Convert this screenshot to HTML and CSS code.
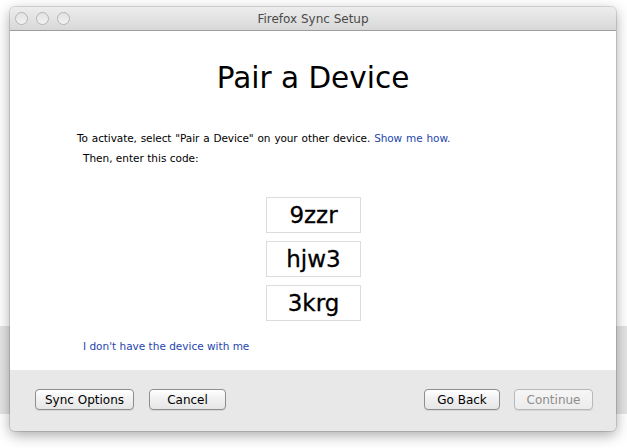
FILE: index.html
```html
<!DOCTYPE html>
<html>
<head>
<meta charset="utf-8">
<link rel="stylesheet" href="styles.css">
</head>
<body>
<div class="desktop">
  <div class="backwin"></div>
  <div class="window">
    <div class="titlebar">
      <div class="lights">
        <span class="light"></span><span class="light"></span><span class="light"></span>
      </div>
      <div class="title">Firefox Sync Setup</div>
    </div>
    <div class="content">
      <h1 class="heading">Pair a Device</h1>
      <p class="line1">To activate, select "Pair a Device" on your other device. <a class="link">Show me how.</a></p>
      <p class="line2">Then, enter this code:</p>
      <div class="codes">
        <div class="code">9zzr</div>
        <div class="code">hjw3</div>
        <div class="code">3krg</div>
      </div>
      <a class="link nodevice">I don't have the device with me</a>
    </div>
    <div class="footer">
      <div class="group">
        <button class="btn btn-options">Sync Options</button>
        <button class="btn btn-cancel">Cancel</button>
      </div>
      <div class="group">
        <button class="btn btn-back">Go Back</button>
        <button class="btn btn-continue" disabled>Continue</button>
      </div>
    </div>
  </div>
</div>
</body>
</html>
```
FILE: styles.css
```css
html, body {
  margin: 0;
  padding: 0;
  background: #ffffff;
}
.desktop {
  position: relative;
  width: 627px;
  height: 448px;
  overflow: hidden;
  font-family: "DejaVu Sans", "Liberation Sans", sans-serif;
}
.backwin {
  position: absolute;
  left: 0;
  top: 326px;
  width: 627px;
  height: 88px;
  background: #e4e4e4;
}
.window {
  position: absolute;
  left: 10px;
  top: 7px;
  width: 606px;
  height: 424px;
  display: flex;
  flex-direction: column;
  border-radius: 5px;
  background: #e8e8e8;
  box-shadow: 0 4px 14px rgba(0,0,0,0.35), 0 0 0 1px rgba(0,0,0,0.12);
  overflow: hidden;
}
.titlebar {
  height: 23px;
  flex: none;
  position: relative;
  display: flex;
  align-items: center;
  justify-content: center;
  background: linear-gradient(#ededed, #d8d8d8);
  border-bottom: 1px solid #9d9d9d;
}
.lights {
  position: absolute;
  left: 5px;
  top: 5px;
  display: flex;
  gap: 8px;
}
.light {
  width: 11px;
  height: 11px;
  border-radius: 50%;
  border: 1px solid #b4b4b4;
  background: linear-gradient(#e2e2e2, #f2f2f2);
}
.title {
  font-size: 12px;
  color: #4a4a4a;
  padding-top: 1px;
}
.content {
  height: 339px;
  flex: none;
  background: #ffffff;
  display: flex;
  flex-direction: column;
}
.heading {
  margin: 27px 0 0 0;
  text-align: center;
  font-weight: normal;
  font-size: 29.5px;
  line-height: 40px;
  color: #000;
}
.line1 {
  margin: 33px 0 0 67px;
  font-size: 10.5px;
  letter-spacing: -0.1px;
  word-spacing: 0.75px;
  line-height: 14px;
  color: #000;
}
.line2 {
  margin: 6px 0 0 73px;
  font-size: 10.5px;
  line-height: 14px;
  color: #000;
}
.link {
  color: #2546ae;
}
.codes {
  margin-top: 32px;
  display: flex;
  flex-direction: column;
  align-items: center;
  gap: 8px;
}
.code {
  width: 93px;
  height: 34px;
  border: 1px solid #dcdcdc;
  display: flex;
  align-items: center;
  justify-content: center;
  font-size: 23px;
  color: #000;
  margin-left: 1px;
  -webkit-text-stroke: 0.3px #000;
}
.nodevice {
  margin: 18px 0 0 73px;
  font-size: 10.5px;
  line-height: 14px;
}
.footer {
  flex: 1;
  display: flex;
  justify-content: space-between;
  align-items: flex-start;
  padding: 19px 23px 0 25px;
  background: #e8e8e8;
}
.group {
  display: flex;
  gap: 15px;
}
.btn {
  height: 21px;
  padding: 0;
  border: 1px solid #8e8e8e;
  border-radius: 4px;
  background: linear-gradient(#ffffff, #f0f0f0 50%, #e6e6e6);
  font-family: "DejaVu Sans", "Liberation Sans", sans-serif;
  font-size: 12px;
  color: #000;
  box-shadow: 0 1px 0 rgba(0,0,0,0.08);
}
.btn-options { width: 99px; }
.btn-cancel { width: 77px; }
.btn-back { width: 76px; }
.btn-continue {
  width: 79px;
  color: #8d8d8d;
  border-color: #b8b8b8;
  background: linear-gradient(#f6f6f6, #ececec);
}
.group + .group {
  gap: 14px;
}
```
